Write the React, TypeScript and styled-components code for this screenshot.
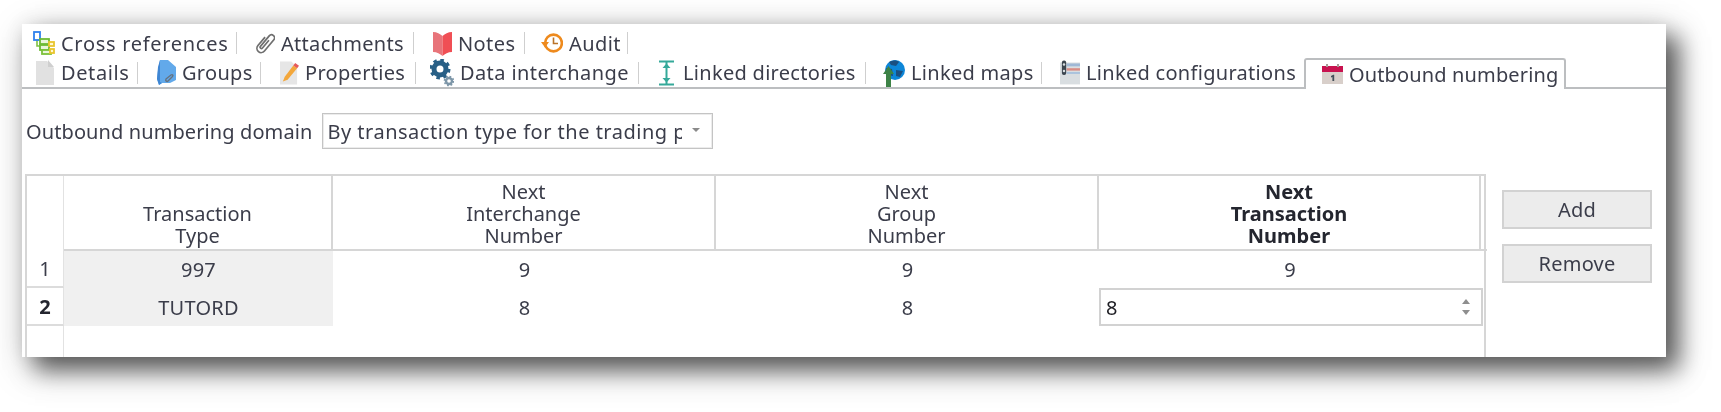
import React from "react";
import styled, { createGlobalStyle } from "styled-components";

const GlobalStyle = createGlobalStyle`
  html, body {
    margin: 0;
    background: #fff;
  }
  body {
    font-family: "Noto Sans", "Liberation Sans", sans-serif;
    font-size: 20px;
    letter-spacing: 0.25px;
    color: #3b3d4a;
  }
`;

const CrossRefIcon = () => (
  <svg width="22" height="24" viewBox="0 0 22 24" fill="none">
    <path d="M4 9v6h5M11 12v8h3" stroke="#7fc241" strokeWidth="1.6" />
    <rect x="1" y="1" width="6" height="8" fill="#fff" stroke="#2f80ed" strokeWidth="1.8" />
    <rect x="7" y="8" width="9" height="5" fill="#e9f5dc" stroke="#6dbb35" strokeWidth="1.8" />
    <rect x="7" y="14" width="9" height="5" fill="#e9f5dc" stroke="#6dbb35" strokeWidth="1.8" />
    <rect x="9" y="19" width="9" height="4" fill="#e9f5dc" stroke="#7cc13a" strokeWidth="1.8" />
    <rect x="16" y="11" width="5" height="4" fill="#fff7d0" stroke="#e8c52e" strokeWidth="1.8" />
    <rect x="17" y="18" width="4" height="4" fill="#fff7d0" stroke="#e8c52e" strokeWidth="1.8" />
  </svg>
);

const ClipIcon = () => (
  <svg width="23" height="27" viewBox="0 0 23 27" fill="none">
    <g transform="translate(0.500 0.500) rotate(40 11 13) translate(-1.800 -2) scale(1.160)">
      <path
        d="M7 8v11a4.200 4.200 0 0 0 8.400 0V4.500a3 3 0 0 0-6 0V18a1.300 1.300 0 0 0 2.600 0V8"
        stroke="#6f6f6f"
        strokeWidth="1.700"
      />
    </g>
  </svg>
);

const BookIcon = () => (
  <svg width="19" height="25" viewBox="0 0 19 25">
    <path d="M0 1c4 0 7 2 9.500 4V25C7 23 4 21 0 21z" fill="#e8747a" />
    <path d="M19 1c-4 0-7 2-9.500 4V25c2.500-2 5.500-4 9.500-4z" fill="#f04f55" />
  </svg>
);

const AuditIcon = () => (
  <svg width="22" height="24" viewBox="0 0 22 24" fill="none">
    <circle cx="12.500" cy="12" r="8.400" stroke="#ee8a1d" strokeWidth="2.600" />
    <path d="M0 11h8l-4 5.500z" fill="#ee8a1d" />
    <path d="M12.500 6.500v6h4.500" stroke="#b9732a" strokeWidth="1.600" />
  </svg>
);

const DocIcon = () => (
  <svg width="18" height="25" viewBox="0 0 18 25">
    <path d="M0 1h11l7 7v17H0z" fill="#e1e1e1" />
    <path d="M12 0v7h6z" fill="#cfcfcf" />
  </svg>
);

const GroupIcon = () => (
  <svg width="19" height="27" viewBox="0 0 19 27" fill="none">
    <path d="M3 1h8l8 7v13l-6 3H5l-3 2-2-6 1-9z" fill="#62a9ea" />
    <path d="M1 8l2-7v22l2 1-3 2-2-6z" fill="#3f86d3" />
    <path d="M9 20l5-4c1.500-1 2.500.500 1.500 1.500L11 22c-1 1-3 0-2-2z" stroke="#66727f" strokeWidth="1.400" />
  </svg>
);

const PropertiesIcon = () => (
  <svg width="20" height="25" viewBox="0 0 20 25">
    <path d="M0 1h12l6 6v18H0z" fill="#e6e6e6" />
    <path d="M3 22l2-5L14 5l4 3L8 20z" fill="#f3a73b" />
    <path d="M14 5l2-2.500 4 3L18 8z" fill="#e75a5a" />
  </svg>
);

const GearsIcon = () => (
  <svg width="24" height="28" viewBox="0 0 24 28" fill="none">
    <circle cx="10" cy="10" r="6" stroke="#285f86" strokeWidth="5" />
    <circle cx="10" cy="10" r="9" stroke="#285f86" strokeWidth="3" strokeDasharray="3.500 3.570" />
    <circle cx="19" cy="22" r="3" stroke="#7d96a8" strokeWidth="2.400" />
    <circle cx="19" cy="22" r="4.600" stroke="#7d96a8" strokeWidth="1.500" strokeDasharray="1.800 1.800" />
  </svg>
);

const DirectoriesIcon = () => (
  <svg width="15" height="26" viewBox="0 0 15 26" fill="none">
    <path d="M0 1.500h15M0 24.500h15M7.500 2v22" stroke="#35a99a" strokeWidth="2" />
    <path d="M3.500 8 7.500 3.500 11.500 8zM3.500 18l4 4.500 4-4.500z" fill="#35a99a" />
  </svg>
);

const GlobeIcon = () => (
  <svg width="22" height="28" viewBox="0 0 22 28">
    <circle cx="12" cy="11" r="10" fill="#0d86d8" />
    <path d="M6 3c4-2 8-2 10 0l-3 4-5-1zM13 11l7 1-3 6-4-1zM3 9l6 1 1 7-5-1z" fill="#1a4f82" />
    <path d="M3 28V15H0l5.500-8 5.500 8H8v13z" fill="#3d8246" />
  </svg>
);

const ConfigIcon = () => (
  <svg width="21" height="25" viewBox="0 0 21 25">
    <rect y="2" width="21" height="23" fill="#d9dee1" />
    <rect x="7" y="3" width="14" height="3" fill="#9fb8d6" />
    <rect x="7" y="8" width="14" height="2.500" fill="#d98c84" />
    <rect x="7" y="12" width="14" height="2" fill="#a9c2dd" />
    <rect x="2" y="0" width="4.500" height="15" rx="2" fill="#3c4650" />
    <circle cx="4.200" cy="4" r="1.300" fill="#d9dee1" />
    <circle cx="4.200" cy="11" r="1.300" fill="#d9dee1" />
  </svg>
);

const CalendarIcon = () => (
  <svg width="21" height="20" viewBox="0 0 21 20">
    <rect y="3" width="21" height="17" fill="#d8cfca" />
    <rect y="2" width="21" height="6" fill="#c8124f" />
    <rect x="4" y="0" width="2" height="3" fill="#a79d98" />
    <rect x="15" y="0" width="2" height="3" fill="#a79d98" />
    <path d="M9 12l2.200-1.200h1V17h-1.800v-4l-1.400.600z" fill="#44505a" />
  </svg>
);

const upperTabs = [
  { label: "Cross references", width: 215, lead: 11, slot: 22, track: 0.7, icon: <CrossRefIcon /> },
  { label: "Attachments", width: 177, lead: 18, slot: 20, track: 0.3, icon: <ClipIcon /> },
  { label: "Notes", width: 111, lead: 19, slot: 19, track: 0.4, icon: <BookIcon /> },
  { label: "Audit", width: 103, lead: 16, slot: 22, track: 0.4, icon: <AuditIcon /> },
];

const lowerTabs = [
  { label: "Details", width: 116, lead: 14, slot: 19, track: 0.6, icon: <DocIcon /> },
  { label: "Groups", width: 123, lead: 19, slot: 19, track: 0.3, icon: <GroupIcon /> },
  { label: "Properties", width: 155, lead: 19, slot: 19, track: 0.3, icon: <PropertiesIcon /> },
  { label: "Data interchange", width: 223, lead: 14, slot: 24, track: 0.4, icon: <GearsIcon /> },
  { label: "Linked directories", width: 227, lead: 20, slot: 18, track: 0.3, icon: <DirectoriesIcon /> },
  { label: "Linked maps", width: 176, lead: 17, slot: 22, track: 0.3, icon: <GlobeIcon /> },
  { label: "Linked configurations", width: 262, lead: 18, slot: 20, track: 0.3, plain: true, icon: <ConfigIcon /> },
];

const rows = [
  { id: 1, type: "997", interchange: "9", group: "9", transaction: "9" },
  { id: 2, type: "TUTORD", interchange: "8", group: "8", transaction: "8" },
];

export default function App() {
  return (
    <Page>
      <GlobalStyle />
      <Panel>
        <Content>
          <TabArea>
            <UpperTabRow>
              {upperTabs.map((tab) => (
                <Tab key={tab.label} $width={tab.width} $lead={tab.lead} $track={tab.track}>
                  <IconSlot $width={tab.slot}>{tab.icon}</IconSlot>
                  {tab.label}
                </Tab>
              ))}
            </UpperTabRow>
            <TabRow>
              {lowerTabs.map((tab) => (
                <Tab
                  key={tab.label}
                  $width={tab.width}
                  $lead={tab.lead}
                  $track={tab.track}
                  $plain={tab.plain}
                >
                  <IconSlot $width={tab.slot}>{tab.icon}</IconSlot>
                  {tab.label}
                </Tab>
              ))}
              <ActiveTab>
                <IconSlot $width={21}>
                  <CalendarIcon />
                </IconSlot>
                Outbound numbering
              </ActiveTab>
            </TabRow>
          </TabArea>

          <DomainRow>
            <DomainLabel>Outbound numbering domain</DomainLabel>
            <Combo>
              <ComboText>By transaction type for the trading partner</ComboText>
              <Caret />
            </Combo>
          </DomainRow>

          <Body>
            <Grid>
              <Corner />
              <HeadCell>
                Transaction
                <br />
                Type
              </HeadCell>
              <HeadCell>
                Next
                <br />
                Interchange
                <br />
                Number
              </HeadCell>
              <HeadCell>
                Next
                <br />
                Group
                <br />
                Number
              </HeadCell>
              <HeadCell $bold>
                Next
                <br />
                Transaction
                <br />
                Number
              </HeadCell>
              <HeadStub />

              {rows.map((row) => (
                <React.Fragment key={row.id}>
                  <RowNumber $current={row.id === 2}>{row.id}</RowNumber>
                  <Cell $shaded>{row.type}</Cell>
                  <Cell>{row.interchange}</Cell>
                  <Cell>{row.group}</Cell>
                  {row.id === 2 ? (
                    <EditCell>
                      <SpinEditor>
                        {row.transaction}
                        <SpinArrows>
                          <SpinUp />
                          <SpinDown />
                        </SpinArrows>
                      </SpinEditor>
                    </EditCell>
                  ) : (
                    <>
                      <Cell>{row.transaction}</Cell>
                      <div />
                    </>
                  )}
                </React.Fragment>
              ))}
              <EmptyNumber />
            </Grid>

            <Actions>
              <ActionButton>Add</ActionButton>
              <ActionButton>Remove</ActionButton>
            </Actions>
          </Body>
        </Content>
      </Panel>
    </Page>
  );
}

const Page = styled.div`
  box-sizing: border-box;
  width: 1721px;
  height: 412px;
  padding: 24px 55px 55px 22px;
  overflow: hidden;
`;

const Panel = styled.div`
  width: 1644px;
  height: 333px;
  background: #fff;
  box-shadow: 13px 13px 22px rgba(0, 0, 0, 0.55), 6px 10px 36px rgba(0, 0, 0, 0.25),
    0 0 20px rgba(0, 0, 0, 0.07);
  overflow: hidden;
`;

const Content = styled.div`
  padding-top: 6px;
  filter: blur(0.35px);
`;

const TabArea = styled.div`
  display: flow-root;
  border-bottom: 2px solid #bcbec0;
  height: 57px;
`;

const TabRow = styled.div`
  display: flex;
  height: 28.5px;
  align-items: center;
`;

const UpperTabRow = styled(TabRow)`
  margin-top: -1px;
  margin-bottom: 1px;
`;

const Tab = styled.div<{ $width: number; $lead: number; $track: number; $plain?: boolean }>`
  box-sizing: border-box;
  display: flex;
  align-items: center;
  flex: none;
  width: ${(p) => p.$width}px;
  height: 22px;
  gap: 6px;
  padding-left: ${(p) => p.$lead}px;
  letter-spacing: ${(p) => p.$track}px;
  border-right: 1px solid ${(p) => (p.$plain ? "transparent" : "#cfcfcf")};
  white-space: nowrap;
`;

const ActiveTab = styled.div`
  display: flex;
  align-items: center;
  align-self: flex-start;
  box-sizing: border-box;
  height: 31px;
  gap: 6px;
  margin-top: -1px;
  padding: 0 6px 0 16px;
  letter-spacing: 0.14px;
  background: #fff;
  border: 2px solid #bcbec0;
  border-bottom: none;
  border-radius: 3px 3px 0 0;
  white-space: nowrap;
`;

const IconSlot = styled.span<{ $width: number }>`
  display: flex;
  align-items: center;
  flex: none;
  width: ${(p) => p.$width}px;
  height: 22px;
`;

const DomainRow = styled.div`
  display: flex;
  align-items: center;
  gap: 10px;
  margin-top: 24px;
  padding-left: 4px;
`;

const DomainLabel = styled.span`
  letter-spacing: 0.1px;
  white-space: nowrap;
`;

const Combo = styled.div`
  box-sizing: border-box;
  display: flex;
  align-items: center;
  width: 391px;
  height: 36px;
  padding: 0 12px 0 4px;
  border: 1px solid #c4c4c4;
  box-shadow: inset 0 0 0 1px #ececec;
`;

const ComboText = styled.span`
  width: 355px;
  overflow: hidden;
  letter-spacing: 0.5px;
  white-space: nowrap;
`;

const Caret = styled.span`
  margin-left: auto;
  border-left: 4px solid transparent;
  border-right: 4px solid transparent;
  border-top: 4px solid #8a8a8a;
  margin-bottom: 3px;
`;

const Body = styled.div`
  display: flex;
  align-items: flex-start;
  margin-top: 25px;
  padding-left: 3px;
`;

const Grid = styled.div`
  display: grid;
  grid-template-columns: 37px 269px 383px 383px 382px 6px;
  grid-template-rows: 75px 37px 38px 60px;
  box-sizing: border-box;
  width: 1461px;
  border-top: 2px solid #d6d6d6;
  border-left: 2px solid #d6d6d6;
  border-right: 2px solid #d6d6d6;
  margin-right: 16px;
  flex: none;
`;

const Corner = styled.div`
  border-right: 1px solid #e2e2e2;
`;

const HeadCell = styled.div<{ $bold?: boolean }>`
  box-sizing: border-box;
  display: flex;
  flex-direction: column;
  justify-content: flex-end;
  align-items: center;
  padding-bottom: 2px;
  text-align: center;
  line-height: 22px;
  letter-spacing: 0;
  font-weight: ${(p) => (p.$bold ? 700 : 400)};
  color: ${(p) => (p.$bold ? "#24262f" : "inherit")};
  border-right: 2px solid #d6d6d6;
  border-bottom: 2px solid #d6d6d6;
`;

const HeadStub = styled.div`
  border-bottom: 2px solid #d6d6d6;
`;

const RowNumber = styled.div<{ $current?: boolean }>`
  display: flex;
  align-items: center;
  justify-content: center;
  font-weight: ${(p) => (p.$current ? 700 : 400)};
  color: ${(p) => (p.$current ? "#24262f" : "inherit")};
  border-right: 1px solid #e2e2e2;
  border-bottom: 2px solid #dcdcdc;
`;

const EmptyNumber = styled.div`
  border-right: 1px solid #e2e2e2;
`;

const Cell = styled.div<{ $shaded?: boolean }>`
  display: flex;
  align-items: center;
  justify-content: center;
  background: ${(p) => (p.$shaded ? "#f0f0f0" : "transparent")};
`;

const EditCell = styled.div`
  grid-column: span 2;
  padding-right: 4px;
`;

const SpinEditor = styled.div`
  box-sizing: border-box;
  display: flex;
  align-items: center;
  justify-content: space-between;
  height: 38px;
  padding: 0 11px 0 5px;
  color: #1e1e24;
  border: 2px solid #d2d2d2;
`;

const SpinArrows = styled.span`
  display: flex;
  flex-direction: column;
  gap: 6px;
`;

const SpinUp = styled.span`
  border-left: 4px solid transparent;
  border-right: 4px solid transparent;
  border-bottom: 5px solid #8e8e8e;
`;

const SpinDown = styled.span`
  border-left: 4px solid transparent;
  border-right: 4px solid transparent;
  border-top: 5px solid #8e8e8e;
`;

const Actions = styled.div`
  display: flex;
  flex-direction: column;
  gap: 15px;
  margin-top: 16px;
`;

const ActionButton = styled.button`
  box-sizing: border-box;
  width: 150px;
  height: 39px;
  padding: 0;
  font: inherit;
  letter-spacing: inherit;
  color: inherit;
  background: #ececec;
  border: 2px solid #d2d2d2;
`;
